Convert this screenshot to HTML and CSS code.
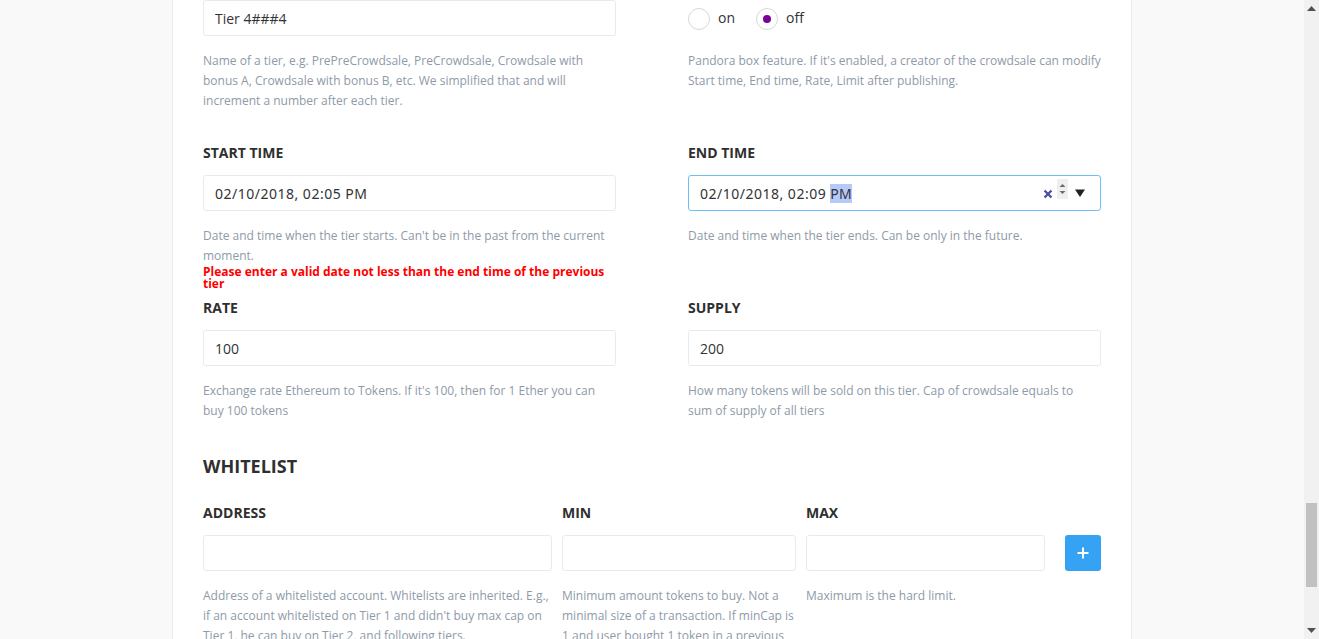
FILE: index.html
```html
<!DOCTYPE html>
<html>
<head>
<meta charset="utf-8">
<link rel="stylesheet" href="styles.css">
</head>
<body>
<div class="window">
  <div class="viewport">
    <div class="container">
      <div class="row row-1">
        <div class="field">
          <div class="input"><span class="value">Tier 4###4</span></div>
          <p class="desc">Name of a tier, e.g. PrePreCrowdsale, PreCrowdsale, Crowdsale with bonus A, Crowdsale with bonus B, etc. We simplified that and will increment a number after each tier.</p>
        </div>
        <div class="field">
          <div class="radios">
            <label class="radio"><span class="circle"></span><span class="radio-text">on</span></label>
            <label class="radio"><span class="circle checked"></span><span class="radio-text">off</span></label>
          </div>
          <p class="desc">Pandora box feature. If it's enabled, a creator of the crowdsale can modify Start time, End time, Rate, Limit after publishing.</p>
        </div>
      </div>

      <div class="row row-2">
        <div class="field">
          <div class="label">START TIME</div>
          <div class="input"><span class="value date">02/10/2018, 02:05 PM</span></div>
          <p class="desc">Date and time when the tier starts. Can't be in the past from the current moment.</p>
          <p class="error">Please enter a valid date not less than the end time of the previous tier</p>
        </div>
        <div class="field">
          <div class="label">END TIME</div>
          <div class="input focused">
            <span class="value date">02/10/2018, 02:09 <span class="sel">PM</span></span>
            <span class="controls">
              <svg class="clear" width="10" height="10" viewBox="0 0 10 10"><path d="M1.5 1.5 L8.5 8.5 M8.5 1.5 L1.5 8.5" stroke="#4b4b9e" stroke-width="2.2" stroke-linecap="butt"/></svg>
              <span class="spin">
                <svg width="11" height="20" viewBox="0 0 11 20"><path d="M2.5 8 L5.5 5 L8.5 8 Z" fill="#6a6a6a"/><path d="M2.5 12 L5.5 15 L8.5 12 Z" fill="#6a6a6a"/></svg>
              </span>
              <svg class="drop" width="12" height="10" viewBox="0 0 12 10"><path d="M1 1.5 L11 1.5 L6 9 Z" fill="#222"/></svg>
            </span>
          </div>
          <p class="desc">Date and time when the tier ends. Can be only in the future.</p>
        </div>
      </div>

      <div class="row row-3">
        <div class="field">
          <div class="label">RATE</div>
          <div class="input"><span class="value">100</span></div>
          <p class="desc">Exchange rate Ethereum to Tokens. If it's 100, then for 1 Ether you can buy 100 tokens</p>
        </div>
        <div class="field">
          <div class="label">SUPPLY</div>
          <div class="input"><span class="value">200</span></div>
          <p class="desc desc-narrow">How many tokens will be sold on this tier. Cap of crowdsale equals to sum of supply of all tiers</p>
        </div>
      </div>

      <h2 class="section-title">WHITELIST</h2>

      <div class="whitelist">
        <div class="field">
          <div class="label">ADDRESS</div>
          <div class="input"></div>
          <p class="desc">Address of a whitelisted account. Whitelists are inherited. E.g., if an account whitelisted on Tier 1 and didn't buy max cap on Tier 1, he can buy on Tier 2, and following tiers.</p>
        </div>
        <div class="field">
          <div class="label">MIN</div>
          <div class="input"></div>
          <p class="desc">Minimum amount tokens to buy. Not a minimal size of a transaction. If minCap is 1 and user bought 1 token in a previous transaction and buying 0.1 token it will allow him to buy.</p>
        </div>
        <div class="field">
          <div class="label">MAX</div>
          <div class="input"></div>
          <p class="desc">Maximum is the hard limit.</p>
        </div>
        <div class="field add-cell">
          <div class="label">&nbsp;</div>
          <button class="add-btn" type="button">
            <svg width="12" height="12" viewBox="0 0 12 12"><path d="M6 0.5 V11.5 M0.5 6 H11.5" stroke="#fff" stroke-width="2"/></svg>
          </button>
        </div>
      </div>
    </div>
  </div>
  <div class="scrollbar">
    <div class="sb-arrow"><svg width="9" height="5" viewBox="0 0 9 5"><path d="M0 5 L4.5 0 L9 5 Z" fill="#505050"/></svg></div>
    <div class="sb-track"><div class="sb-thumb"></div></div>
    <div class="sb-arrow"><svg width="9" height="5" viewBox="0 0 9 5"><path d="M0 0 L9 0 L4.5 5 Z" fill="#505050"/></svg></div>
  </div>
</div>
</body>
</html>
```

FILE: styles.css
```css
* { box-sizing: border-box; }

html, body {
  margin: 0;
  padding: 0;
  height: 100%;
  overflow: hidden;
}

body {
  font-family: "Open Sans", "Liberation Sans", sans-serif;
  background: #f9f9f9;
  color: #333;
}

.window {
  display: flex;
  height: 639px;
}

.viewport {
  flex: 1;
  overflow: hidden;
}

.container {
  width: 960px;
  height: 100%;
  margin: 0 auto;
  background: #fff;
  border-left: 1px solid #ededed;
  border-right: 1px solid #ededed;
  padding: 0 30px;
}

.row {
  display: grid;
  grid-template-columns: 1fr 1fr;
  column-gap: 72px;
}

.row-1 { margin-bottom: 32px; }
.row-2 { margin-bottom: 8px; }
.row-3 { margin-bottom: 33px; }

.label {
  font-size: 14px;
  font-weight: 700;
  line-height: 20px;
  color: #2f2f2f;
  margin-bottom: 12px;
}

.input {
  height: 36px;
  border: 1px solid #eaeaea;
  border-radius: 3px;
  background: #fff;
  display: flex;
  align-items: center;
  padding: 0 11px;
  font-size: 14px;
  color: #333;
}

.input.focused {
  border-color: #6cc0f5;
}

.value.date {
  font-family: "Noto Sans", "Open Sans", sans-serif;
  font-size: 14px;
  letter-spacing: 0.5px;
  color: #333;
}

.sel {
  background: #b5c9fb;
  letter-spacing: 0.2px;
}

.controls {
  margin-left: auto;
  display: flex;
  align-items: center;
  margin-right: 3px;
}

.clear { margin-right: 4px; margin-top: 1px; }

.spin {
  width: 11px;
  height: 20px;
  background: #efefef;
  display: flex;
  align-self: flex-start;
  margin-top: -9px;
  margin-right: 6px;
}

.drop { margin-top: -1px; }

.desc {
  margin: 15px 0 0;
  font-size: 12px;
  line-height: 20px;
  color: #8e9aa8;
}

.desc-narrow {
  padding-right: 2px;
}

.error {
  margin: 0;
  font-size: 12px;
  font-weight: 700;
  line-height: 12px;
  color: #ff0000;
}

.radios {
  height: 36px;
  display: flex;
  align-items: center;
  gap: 21px;
  padding-top: 1px;
}

.radio {
  display: flex;
  align-items: center;
  gap: 8px;
  font-size: 14px;
  color: #333;
}

.circle {
  width: 22px;
  height: 22px;
  border: 1px solid #d8d8d8;
  border-radius: 50%;
  background: #fff;
  display: flex;
  align-items: center;
  justify-content: center;
}

.circle.checked::after {
  content: "";
  width: 8px;
  height: 8px;
  border-radius: 50%;
  background: #7d0196;
}

.radio-text { margin-top: -3px; }

.section-title {
  margin: 0 0 25px;
  font-size: 18px;
  font-weight: 700;
  line-height: 24px;
  color: #2f2f2f;
}

.whitelist {
  display: grid;
  grid-template-columns: 349px 234px 239px 36px;
  column-gap: 10px;
}

.add-cell { margin-left: 10px; }

.add-btn {
  width: 36px;
  height: 36px;
  border: none;
  border-radius: 3px;
  background: #35a2f4;
  display: flex;
  align-items: center;
  justify-content: center;
  padding: 0;
}

.scrollbar {
  width: 15px;
  background: #f1f1f1;
  display: flex;
  flex-direction: column;
}

.sb-arrow {
  height: 17px;
  display: flex;
  align-items: center;
  justify-content: center;
}

.sb-track {
  flex: 1;
  display: flex;
  flex-direction: column;
  justify-content: flex-end;
  padding: 0 2px 35px;
}

.sb-thumb {
  height: 84px;
  background: #c1c1c1;
}
```
